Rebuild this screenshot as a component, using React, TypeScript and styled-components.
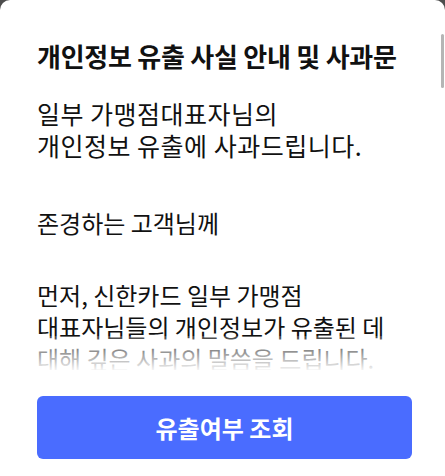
import styled, { createGlobalStyle } from "styled-components";

const GlobalStyle = createGlobalStyle`
  html, body {
    margin: 0;
    padding: 0;
  }
  body {
    background: #4d4d4d;
    font-family: "Noto Sans CJK KR", "Noto Sans", sans-serif;
    color: #111111;
  }
`;

type Block = { lines: string[]; gap: number; lead?: boolean };

const paragraphs: Block[] = [
  { lines: ["일부 가맹점대표자님의", "개인정보 유출에 사과드립니다."], gap: 0, lead: true },
  { lines: ["존경하는 고객님께"], gap: 46 },
  {
    lines: [
      "먼저, 신한카드 일부 가맹점",
      "대표자님들의 개인정보가 유출된 데",
      "대해 깊은 사과의 말씀을 드립니다.",
    ],
    gap: 40,
  },
];

export default function App() {
  return (
    <>
      <GlobalStyle />
      <Sheet>
        <Letter>
          <Title>개인정보 유출 사실 안내 및 사과문</Title>
          <Body>
            {paragraphs.map((p, i) => (
              <Paragraph key={i} $gap={p.gap} $lead={!!p.lead}>
                {p.lines.map((line) => (
                  <Line key={line}>{line}</Line>
                ))}
              </Paragraph>
            ))}
          </Body>
          <Fade />
          <ScrollThumb />
        </Letter>
        <Footer>
          <PrimaryButton type="button">유출여부 조회</PrimaryButton>
        </Footer>
      </Sheet>
    </>
  );
}

const Sheet = styled.div`
  width: 445px;
  height: 476px;
  background: #ffffff;
  border-radius: 10px 10px 0 0;
  display: flex;
  flex-direction: column;
  overflow: hidden;
`;

const Letter = styled.div`
  position: relative;
  height: 370px;
  overflow: hidden;
  padding: 40px 33px 0 37px;
  box-sizing: border-box;
`;

const Title = styled.h2`
  margin: 0;
  font-size: 26px;
  line-height: 32px;
  font-weight: 700;
  letter-spacing: -0.25px;
  color: #111111;
`;

const Body = styled.div`
  margin-top: 25px;
`;

const Paragraph = styled.p<{ $gap: number; $lead: boolean }>`
  margin: ${({ $gap }) => $gap}px 0 0;
  font-size: ${({ $lead }) => ($lead ? 25 : 24)}px;
  letter-spacing: ${({ $lead }) => ($lead ? 0.5 : 0)}px;
  line-height: 32px;
  font-weight: 400;
`;

const Line = styled.span`
  display: block;
  white-space: nowrap;
`;

const Fade = styled.div`
  position: absolute;
  left: 0;
  right: 0;
  bottom: 0;
  height: 34px;
  background: linear-gradient(
    to bottom,
    rgba(255, 255, 255, 0.2),
    rgba(255, 255, 255, 0.95)
  );
`;

const ScrollThumb = styled.div`
  position: absolute;
  top: 34px;
  right: 1px;
  width: 3px;
  height: 54px;
  border-radius: 2px;
  background: #b5b5b5;
`;

const Footer = styled.div`
  padding: 26px 33px 0 37px;
`;

const PrimaryButton = styled.button`
  width: 100%;
  height: 63px;
  border: none;
  border-radius: 6px;
  background: #4a6cff;
  color: #ffffff;
  font-family: "Noto Sans CJK KR", "Noto Sans", sans-serif;
  font-size: 24px;
  font-weight: 700;
  cursor: pointer;
`;
